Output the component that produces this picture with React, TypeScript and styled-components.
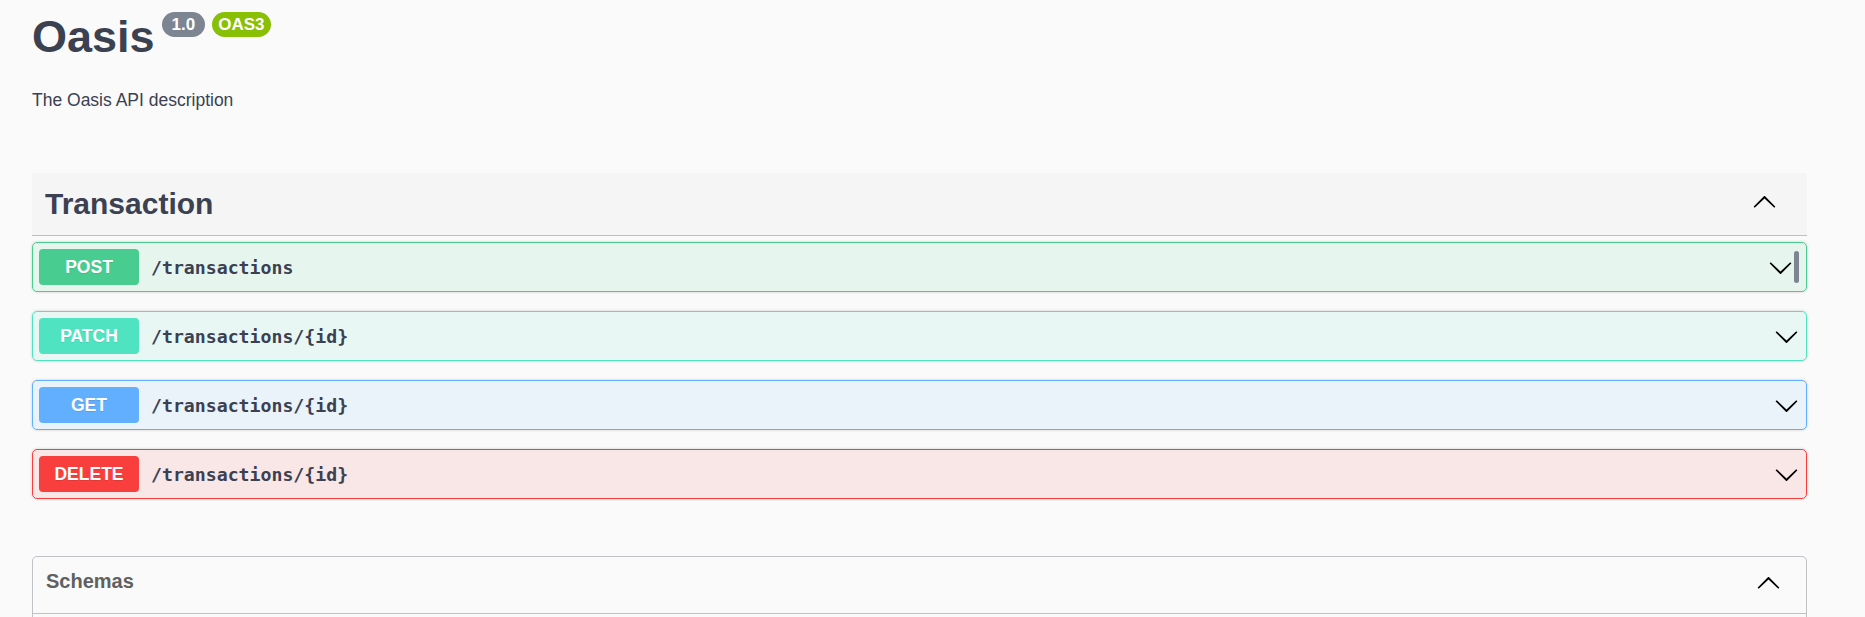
import { FC } from "react";
import styled, { createGlobalStyle } from "styled-components";

const GlobalStyle = createGlobalStyle`
  body {
    margin: 0;
    background: #fafafa;
    font-family: "Liberation Sans", Arial, sans-serif;
    color: #3b4151;
  }
`;

type Method = "POST" | "PATCH" | "GET" | "DELETE";

const methodColors: Record<Method, { main: string; tint: string }> = {
  POST: { main: "#49cc90", tint: "rgba(73, 204, 144, 0.1)" },
  PATCH: { main: "#50e3c2", tint: "rgba(80, 227, 194, 0.1)" },
  GET: { main: "#61affe", tint: "rgba(97, 175, 254, 0.1)" },
  DELETE: { main: "#f93e3e", tint: "rgba(249, 62, 62, 0.1)" },
};

const operations: { method: Method; path: string; copy?: boolean }[] = [
  { method: "POST", path: "/transactions", copy: true },
  { method: "PATCH", path: "/transactions/{id}" },
  { method: "GET", path: "/transactions/{id}" },
  { method: "DELETE", path: "/transactions/{id}" },
];

const Arrow: FC<{ up?: boolean }> = ({ up }) => (
  <ArrowSvg viewBox="0 0 20 20" $up={up}>
    <path d="M17.418 6.109c.272-.268.709-.268.979 0s.271.701 0 .969l-7.908 7.83c-.27.268-.707.268-.979 0l-7.908-7.83c-.27-.268-.27-.701 0-.969.271-.268.709-.268.979 0L10 13.25l7.418-7.141z" />
  </ArrowSvg>
);

export default function App() {
  return (
    <>
      <GlobalStyle />
      <Page>
        <TitleRow>
          <Title>Oasis</Title>
          <Badge $bg="#7d8492" $pad={10}>1.0</Badge>
          <Badge $bg="#89bf04" $pad={6}>OAS3</Badge>
        </TitleRow>
        <Description>The Oasis API description</Description>

        <TagHeader>
          <TagName>Transaction</TagName>
          <HeaderArrow>
            <Arrow up />
          </HeaderArrow>
        </TagHeader>
        <OpList>
          {operations.map((op) => (
            <OpBlock key={op.method} $method={op.method}>
              <MethodLabel $method={op.method}>{op.method}</MethodLabel>
              <OpPath>{op.path}</OpPath>
              <OpArrow>
                <Arrow />
              </OpArrow>
              {op.copy && <CopyTab />}
            </OpBlock>
          ))}
        </OpList>

        <Models>
          <ModelsHeader>
            <ModelsTitle>Schemas</ModelsTitle>
            <ModelsArrow>
              <Arrow up />
            </ModelsArrow>
          </ModelsHeader>
          <ModelsBody />
        </Models>
      </Page>
    </>
  );
}

const Page = styled.div`
  display: flex;
  flex-direction: column;
  width: 1775px;
  padding: 0 0 0 32px;
`;

const TitleRow = styled.div`
  display: flex;
  align-items: flex-start;
  padding-top: 12px;
`;

const Title = styled.h2`
  margin: 2px 0 0;
  font-size: 45px;
  line-height: 45px;
  font-weight: 700;
  color: #3b4151;
`;

const Badge = styled.span<{ $bg: string; $pad: number }>`
  display: flex;
  align-items: center;
  height: 25px;
  margin-left: 7px;
  padding: 0 ${({ $pad }) => $pad}px;
  border-radius: 13px;
  background: ${({ $bg }) => $bg};
  color: #fff;
  font-size: 17px;
  font-weight: 700;
`;

const Description = styled.p`
  margin: 28px 0 0;
  font-size: 17.5px;
  line-height: 26px;
  color: #3b4151;
`;

const TagHeader = styled.div`
  display: flex;
  align-items: center;
  height: 62px;
  margin-top: 60px;
  padding: 0 30px 0 13px;
  background: #f5f5f5;
  border-bottom: 1px solid rgba(59, 65, 81, 0.3);
`;

const TagName = styled.h3`
  flex: 1;
  margin: 0;
  font-size: 30px;
  font-weight: 700;
  color: #3b4151;
`;

const ArrowSvg = styled.svg<{ $up?: boolean }>`
  display: block;
  width: 25px;
  height: 25px;
  fill: #000;
  transform: ${({ $up }) => ($up ? "rotate(180deg)" : "none")};
`;

const HeaderArrow = styled.div`
  margin-bottom: 4px;
`;

const OpList = styled.div`
  display: flex;
  flex-direction: column;
  gap: 19px;
  margin-top: 6px;
`;

const OpBlock = styled.div<{ $method: Method }>`
  display: flex;
  align-items: center;
  height: 50px;
  box-sizing: border-box;
  padding: 0 6px;
  border: 1px solid ${({ $method }) => methodColors[$method].main};
  border-radius: 5px;
  background: ${({ $method }) => methodColors[$method].tint};
  box-shadow: 0 0 3px rgba(0, 0, 0, 0.19);
`;

const MethodLabel = styled.span<{ $method: Method }>`
  display: flex;
  align-items: center;
  justify-content: center;
  width: 100px;
  height: 36px;
  border-radius: 4px;
  background: ${({ $method }) => methodColors[$method].main};
  color: #fff;
  font-size: 17.5px;
  font-weight: 700;
  text-shadow: 0 1px 0 rgba(0, 0, 0, 0.1);
`;

const OpPath = styled.span`
  flex: 1;
  margin-left: 12px;
  font-family: "DejaVu Sans Mono", "Liberation Mono", monospace;
  font-size: 18.2px;
  font-weight: 700;
  color: #3b4151;
`;

const OpArrow = styled.div`
  margin-right: 1px;
`;

const CopyTab = styled.div`
  width: 5px;
  height: 32px;
  margin: 0 1px 0 0;
  border-radius: 3px;
  background: #7d8492;
`;

const Models = styled.section`
  margin-top: 57px;
  border: 1px solid rgba(59, 65, 81, 0.3);
  border-radius: 5px;
`;

const ModelsHeader = styled.div`
  display: flex;
  align-items: flex-start;
  height: 57px;
  padding: 12px 25px 0 13px;
  box-sizing: border-box;
  border-bottom: 1px solid rgba(59, 65, 81, 0.3);
`;

const ModelsTitle = styled.h4`
  flex: 1;
  margin: 1px 0 0;
  font-size: 20px;
  line-height: 23px;
  font-weight: 700;
  color: #606060;
`;

const ModelsArrow = styled.div`
  margin-top: 2px;
`;

const ModelsBody = styled.div`
  height: 60px;
`;
